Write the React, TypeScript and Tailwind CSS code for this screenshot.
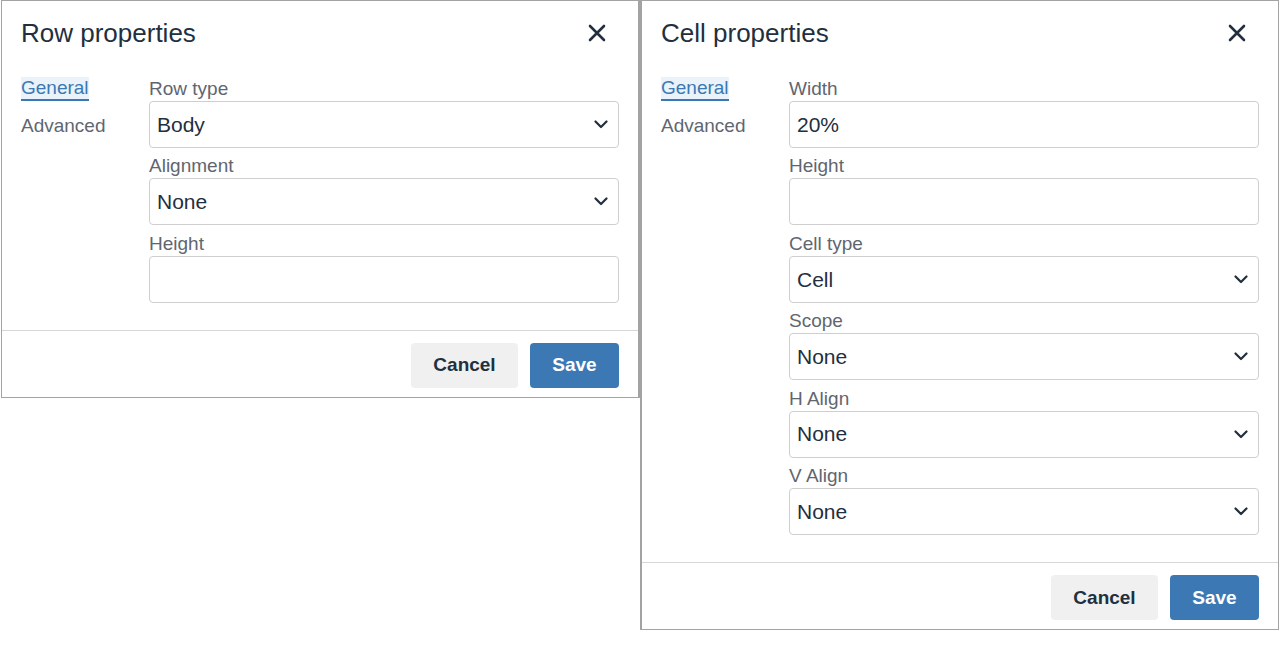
import React from "react";

const font = { fontFamily: '"Liberation Sans", Arial, sans-serif' };

function Chevron() {
  return (
    <svg width="14" height="9" viewBox="0 0 14 9" className="shrink-0">
      <path d="M1.5 1.5 L7 7 L12.5 1.5" fill="none" stroke="#222f3e" strokeWidth="2.2" strokeLinecap="round" strokeLinejoin="round" />
    </svg>
  );
}

function CloseIcon() {
  return (
    <svg width="18" height="18" viewBox="0 0 18 18">
      <path d="M2 2 L16 16 M16 2 L2 16" stroke="#222f3e" strokeWidth="2.6" strokeLinecap="round" />
    </svg>
  );
}

type Field = { label: string; value: string; select: boolean };

function FieldRow({ f }: { f: Field }) {
  return (
    <div className="mb-[6.4px]">
      <div className="h-[24px] leading-[24px] text-[19px] text-[#5f6670]">{f.label}</div>
      <div className="h-[47px] border border-[#cfcfcf] rounded-[4px] bg-white flex items-center justify-between pl-[7px] pr-[10px]">
        <span className="text-[21px] text-[#222f3e]">{f.value}</span>
        {f.select && <Chevron />}
      </div>
    </div>
  );
}

function Dialog({ title, fields, className }: { title: string; fields: Field[]; className: string }) {
  return (
    <div className={"bg-white border-[#a3a3a3] flex flex-col " + className} style={font}>
      <div className="h-[64px] flex items-center justify-between pl-[19px] pr-[32px]">
        <span className="text-[26px] text-[#222f3e]">{title}</span>
        <CloseIcon />
      </div>
      <div className="flex pt-[12px] pl-[19px] pr-[19px] pb-[21px]">
        <div className="w-[128px] shrink-0">
          <div className="h-[24px] flex items-center">
            <span className="relative text-[19px] leading-[22px] text-[#3b78b4] bg-[#eaf2fa] border-b-2 border-[#3b78b4]">General</span>
          </div>
          <div className="h-[24px] leading-[24px] mt-[13px] text-[19px] text-[#5f6670]">Advanced</div>
        </div>
        <div className="flex-1">
          {fields.map((f) => (
            <FieldRow key={f.label} f={f} />
          ))}
        </div>
      </div>
      <div className="border-t border-[#d6d6d6] flex justify-end gap-[12px] pt-[12px] pb-[9px] pr-[19px]">
        <div className="w-[107px] h-[45px] rounded-[4px] bg-[#f0f0f0] flex items-center justify-center text-[19px] font-bold text-[#222f3e]">Cancel</div>
        <div className="w-[89px] h-[45px] rounded-[4px] bg-[#3b78b4] flex items-center justify-center text-[19px] font-bold text-white">Save</div>
      </div>
    </div>
  );
}

export default function App() {
  const rowFields: Field[] = [
    { label: "Row type", value: "Body", select: true },
    { label: "Alignment", value: "None", select: true },
    { label: "Height", value: "", select: false },
  ];
  const cellFields: Field[] = [
    { label: "Width", value: "20%", select: false },
    { label: "Height", value: "", select: false },
    { label: "Cell type", value: "Cell", select: true },
    { label: "Scope", value: "None", select: true },
    { label: "H Align", value: "None", select: true },
    { label: "V Align", value: "None", select: true },
  ];
  return (
    <div className="w-[1280px] h-[668px] bg-white flex items-start overflow-hidden">
      <Dialog title="Row properties" fields={rowFields} className="ml-[1px] w-[639px] border-t border-l border-b border-r-2" />
      <Dialog title="Cell properties" fields={cellFields} className="w-[639px] border-t border-l-2 border-b border-r" />
    </div>
  );
}
